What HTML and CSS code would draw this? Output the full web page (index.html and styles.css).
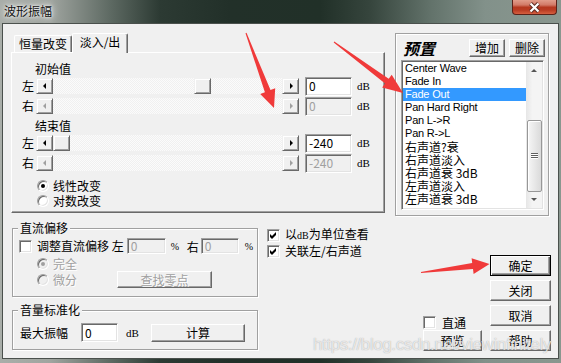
FILE: index.html
```html
<!DOCTYPE html>
<html lang="zh-CN">
<head>
<meta charset="utf-8">
<title>波形振幅</title>
<link rel="stylesheet" href="styles.css">
</head>
<body>
<div class="window">
  <div class="titlebar">
    <span class="title">波形振幅</span>
    <div class="close">
      <svg width="13" height="11" viewBox="0 0 13 11"><path class="x-out" d="M2.5 1.5 L10.5 9.5 M10.5 1.5 L2.5 9.5"/><path class="x-in" d="M2.5 1.5 L10.5 9.5 M10.5 1.5 L2.5 9.5"/></svg>
    </div>
  </div>
  <div class="client">
    <div class="top-row">
      <div class="tabctl">
        <div class="tab-heads">
          <div class="tab">恒量改变</div>
          <div class="tab sel">淡入/出</div>
        </div>
        <div class="tab-panel">
          <div class="sec-label">初始值</div>
          <div class="srow">
            <span class="lr">左</span>
            <div class="hscroll">
              <div class="sbtn"><i class="tri tri-l"></i></div>
              <div class="track"><div class="thumb" style="margin-left:141px"></div></div>
              <div class="sbtn"><i class="tri tri-r"></i></div>
            </div>
            <div class="edit ed-wide">0</div>
            <span class="db">dB</span>
          </div>
          <div class="srow">
            <span class="lr">右</span>
            <div class="hscroll">
              <div class="sbtn"><i class="tri tri-l dis"></i></div>
              <div class="track"></div>
              <div class="sbtn"><i class="tri tri-r dis"></i></div>
            </div>
            <div class="edit ed-wide disabled">0</div>
            <span class="db">dB</span>
          </div>
          <div class="sec-label second">结束值</div>
          <div class="srow">
            <span class="lr">左</span>
            <div class="hscroll">
              <div class="sbtn"><i class="tri tri-l"></i></div>
              <div class="track"><div class="thumb" style="margin-left:0px"></div></div>
              <div class="sbtn"><i class="tri tri-r"></i></div>
            </div>
            <div class="edit ed-wide">-240</div>
            <span class="db">dB</span>
          </div>
          <div class="srow">
            <span class="lr">右</span>
            <div class="hscroll">
              <div class="sbtn"><i class="tri tri-l dis"></i></div>
              <div class="track"></div>
              <div class="sbtn"><i class="tri tri-r dis"></i></div>
            </div>
            <div class="edit ed-wide disabled">-240</div>
            <span class="db">dB</span>
          </div>
          <div class="radios">
            <div class="radio-row"><span class="radio on"></span><span class="rlabel">线性改变</span></div>
            <div class="radio-row"><span class="radio"></span><span class="rlabel">对数改变</span></div>
          </div>
        </div>
      </div>
      <div class="preset">
        <div class="preset-head">
          <span class="preset-title">预置</span>
          <div class="btn small first">增加</div>
          <div class="btn small">删除</div>
        </div>
        <div class="listbox">
          <div class="items">
            <div class="it lat">Center Wave</div>
            <div class="it lat">Fade In</div>
            <div class="it lat sel">Fade Out</div>
            <div class="it lat">Pan Hard Right</div>
            <div class="it lat">Pan L-&gt;R</div>
            <div class="it lat">Pan R-&gt;L</div>
            <div class="it">右声道?衰</div>
            <div class="it">右声道淡入</div>
            <div class="it">右声道衰 3dB</div>
            <div class="it">左声道淡入</div>
            <div class="it">左声道衰 3dB</div>
          </div>
          <div class="vscroll">
            <div class="va"><i class="vtri up"></i></div>
            <div class="vtrack"><div class="vthumb"><i class="grip"></i></div></div>
            <div class="va"><i class="vtri down"></i></div>
          </div>
        </div>
      </div>
    </div>
    <div class="bottom-row">
      <div class="col1">
        <div class="group g1">
          <div class="legend">直流偏移</div>
          <div class="g1-row">
            <span class="check"></span>
            <span class="chk-text">调整直流偏移 左</span>
            <div class="edit ed-dc1 disabled">0</div>
            <span class="pct">%</span>
            <span class="right-lbl">右</span>
            <div class="edit ed-dc2 disabled">0</div>
            <span class="pct pct2">%</span>
          </div>
          <div class="radio-row dis-row r-full"><span class="radio on dis"></span><span class="rlabel dis-text">完全</span></div>
          <div class="g1-last">
            <div class="radio-row dis-row r-diff"><span class="radio dis"></span><span class="rlabel dis-text">微分</span></div>
            <div class="btn find dis-text">查找零点</div>
          </div>
        </div>
        <div class="group g2">
          <div class="legend">音量标准化</div>
          <div class="g2-row">
            <span>最大振幅</span>
            <div class="edit ed-max">0</div>
            <span class="db db2">dB</span>
            <div class="btn calc">计算</div>
          </div>
        </div>
      </div>
      <div class="col2">
        <div class="chk-row"><span class="check on"><svg width="9" height="9" viewBox="0 0 9 9"><path d="M1 3 L3 5 L7 1 L7 4 L3 8 L1 6 Z"/></svg></span><span class="chk-text">以<span class="db-in">dB</span>为单位查看</span></div>
        <div class="chk-row"><span class="check on"><svg width="9" height="9" viewBox="0 0 9 9"><path d="M1 3 L3 5 L7 1 L7 4 L3 8 L1 6 Z"/></svg></span><span class="chk-text">关联左/右声道</span></div>
      </div>
      <div class="col3">
        <div class="chk-row thru"><span class="check"></span><span class="thru-text">直通</span></div>
        <div class="btn act">预览</div>
      </div>
      <div class="col4">
        <div class="btn act def">确定</div>
        <div class="btn act">关闭</div>
        <div class="btn act">取消</div>
        <div class="btn act">帮助</div>
      </div>
    </div>
  </div>
  <svg class="arrows" width="561" height="363" viewBox="0 0 561 363">
    <polygon points="245.5,33.2 264.9,92.2 260.2,93.9 274,108 275.2,88.3 270.5,90.0 246.5,32.8"/>
    <polygon points="333.7,42.4 385.1,83.5 382.1,87.5 403,93 391.7,74.7 388.7,78.7 334.3,41.6"/>
    <polygon points="421.1,273.0 473.0,269.1 473.6,274.0 489.5,264 471.6,258.2 472.2,263.1 420.9,272.0"/>
  </svg>
  <div class="watermark">https://blog.csdn.net/viewinfinitely</div>
</div>
</body>
</html>
```

FILE: styles.css
```css
* { box-sizing: border-box; margin: 0; padding: 0; }
html, body { margin: 0; background: #f0f0f0; }
body {
  font-family: "Noto Sans CJK SC", "Noto Sans", sans-serif;
  font-size: 12px;
  color: #000;
}
i { display: block; }

.window {
  position: relative;
  width: 561px;
  height: 363px;
  overflow: hidden;
  background: linear-gradient(90deg, #a9aea9 0, #a0a5a0 50px, #5e6a63 110px, #2c3a33 160px, #223029 230px, #213028 320px, #36453d 370px, #62726a 430px, #82918a 485px, #8a978f 561px);
}

/* title bar */
.titlebar { height: 23px; display: flex; align-items: flex-start; }
.title {
  margin: 3px 0 0 4px;
  line-height: 16px;
  font-size: 12px;
  color: #111;
  text-shadow: 0 0 3px #fff, 0 0 6px rgba(255,255,255,.8), 0 0 10px rgba(255,255,255,.6);
}
.close {
  margin-left: auto;
  margin-right: 4px;
  width: 45px;
  height: 15px;
  border: 1px solid #5b2219;
  border-top: none;
  border-radius: 0 0 4px 4px;
  background: linear-gradient(#e19c8a 0, #d27a67 35%, #b5381f 52%, #b93c23 72%, #d65f40 100%);
  display: flex;
  align-items: center;
  justify-content: center;
}
.x-out { stroke: #5a2a22; stroke-width: 4; fill: none; }
.x-in { stroke: #fff; stroke-width: 2.2; fill: none; }

/* client */
.client {
  margin-left: 2px;
  width: 557px;
  height: 336px;
  background: #f0f0f0;
  border: 1px solid #4a504c;
  padding: 9px 0 0 8px;
}
.top-row { display: flex; align-items: flex-start; }

/* tabs */
.tabctl { width: 374px; }
.tab-heads {
  position: relative;
  z-index: 1;
  display: flex;
  align-items: flex-end;
  height: 19px;
  padding-left: 3px;
}
.tab {
  height: 17px;
  width: 58px;
  text-align: center;
  line-height: 16px;
  background: #f0f0f0;
  border-top: 1px solid #fff;
  border-left: 1px solid #fff;
  border-right: 1px solid #696969;
  box-shadow: inset -1px 0 #a0a0a0;
  border-radius: 2px 2px 0 0;
}
.tab.sel {
  height: 20px;
  width: 56px;
  margin-bottom: -1px;
}
.tab-panel {
  height: 161px;
  border: 1px solid;
  border-color: #fff #696969 #696969 #fff;
  box-shadow: inset -1px -1px #a0a0a0;
  padding: 9px 0 0 10px;
}
.sec-label { margin-left: 13px; line-height: 14px; }
.sec-label.second { margin-top: 3px; }
.srow { display: flex; align-items: center; height: 20px; }
.lr { width: 14px; line-height: 14px; }
.hscroll { display: flex; width: 263px; height: 16px; }
.sbtn, .thumb {
  width: 17px;
  height: 16px;
  background: #f0f0f0;
  border: 1px solid;
  border-color: #f0f0f0 #696969 #696969 #f0f0f0;
  box-shadow: inset 1px 1px #fff, inset -1px -1px #a0a0a0;
  display: flex;
  align-items: center;
  justify-content: center;
  flex: none;
}
.track {
  flex: 1;
  height: 16px;
  background: repeating-conic-gradient(#f0f0f0 0 25%, #fbfbfb 0 50%) 0 0 / 2px 2px;
}
.tri { width: 0; height: 0; border-top: 3px solid transparent; border-bottom: 3px solid transparent; }
.tri-l { border-right: 3px solid #000; margin-left: -1px; }
.tri-r { border-left: 3px solid #000; margin-left: 1px; }
.tri-l.dis { border-right-color: #a0a0a0; }
.tri-r.dis { border-left-color: #a0a0a0; }

.edit {
  background: #fff;
  border: 1px solid;
  border-color: #a0a0a0 #fff #fff #a0a0a0;
  box-shadow: inset 1px 1px #696969, inset -1px -1px #e3e3e3;
  padding-left: 3px;
  display: flex;
  align-items: center;
  line-height: 14px;
  flex: none;
}
.edit.disabled { background: #f0f0f0; color: #a0a0a0; }
.ed-wide { margin-left: 6px; width: 47px; height: 19px; }
.db {
  display: inline-block;
  width: 12px;
  margin-left: 5px;
  font-family: "Liberation Serif", serif;
  font-size: 11px;
  line-height: 14px;
}

.radios { margin-top: 5px; }
.radio-row { display: flex; align-items: center; height: 15px; padding-left: 15px; }
.radio {
  width: 12px;
  height: 12px;
  border-radius: 50%;
  background: #fff;
  border: 1px solid;
  border-color: #a0a0a0 #fff #fff #a0a0a0;
  box-shadow: inset 1px 1px #696969, inset -1px -1px #e3e3e3;
  display: flex;
  align-items: center;
  justify-content: center;
  flex: none;
}
.radio.on::after {
  content: "";
  width: 4px;
  height: 4px;
  border-radius: 50%;
  background: #000;
}
.radio.dis { background: #f0f0f0; }
.radio.dis.on::after { background: #a0a0a0; }
.rlabel { margin-left: 4px; line-height: 14px; }
.dis-text { color: #a0a0a0; text-shadow: 1px 1px #fff; }

/* preset group */
.preset {
  margin-left: 10px;
  width: 154px;
  height: 183px;
  border: 1px solid #a0a0a0;
  box-shadow: inset 1px 1px #fff, 1px 1px #fff;
  padding: 5px 3px 0 5px;
}
.preset-head { display: flex; align-items: center; height: 18px; }
.preset-title {
  margin-left: 2px;
  font-size: 16px;
  font-weight: bold;
  font-style: italic;
  line-height: 18px;
}
.btn {
  display: flex;
  align-items: center;
  justify-content: center;
  background: #f0f0f0;
  border: 1px solid;
  border-color: #fff #696969 #696969 #fff;
  box-shadow: inset -1px -1px #a0a0a0;
  line-height: 14px;
  flex: none;
}
.btn.small { width: 36px; height: 18px; margin-left: 4px; }
.btn.small.first { margin-left: auto; }

.listbox {
  margin-top: 3px;
  width: 143px;
  height: 150px;
  display: flex;
  background: #fff;
  border: 1px solid;
  border-color: #a0a0a0 #fff #fff #a0a0a0;
  box-shadow: inset 1px 1px #696969, inset -1px -1px #e3e3e3;
  padding: 1px;
}
.items { flex: 1; }
.it {
  height: 13px;
  line-height: 13px;
  padding-left: 2px;
  font-size: 12px;
  white-space: nowrap;
}
.it.lat {
  font-family: "Liberation Sans", Arial, sans-serif;
  font-size: 11px;
  letter-spacing: -0.2px;
}
.it.sel { background: #3399ff; color: #fff; }
.vscroll {
  width: 16px;
  display: flex;
  flex-direction: column;
  background: linear-gradient(90deg, #e6e6e6, #f4f4f4 40%, #f4f4f4);
}
.va { height: 17px; display: flex; align-items: center; justify-content: center; }
.vtri { width: 0; height: 0; border-left: 3px solid transparent; border-right: 3px solid transparent; }
.vtri.up { border-bottom: 3px solid #555; }
.vtri.down { border-top: 3px solid #555; }
.vtrack { flex: 1; }
.vthumb {
  margin: 41px 0 0 1px;
  width: 15px;
  height: 72px;
  border: 1px solid #979797;
  border-radius: 2px;
  background: linear-gradient(90deg, #f6f6f6, #e8e8e8 50%, #dadada);
  box-shadow: inset 1px 1px #fff;
  display: flex;
  align-items: center;
  justify-content: center;
}
.grip {
  width: 7px;
  height: 6px;
  background: repeating-linear-gradient(#5f5f5f 0 1px, #fff 1px 2px);
}

/* bottom */
.bottom-row { display: flex; margin-top: 12px; padding-left: 1px; }
.col1 { width: 246px; flex: none; }
.group {
  border: 1px solid #a0a0a0;
  box-shadow: inset 1px 1px #fff, 1px 1px #fff;
}
.g1 { height: 69px; }
.g2 { height: 40px; margin-top: 13px; }
.legend {
  width: fit-content;
  margin: -8px 0 0 5px;
  padding: 0 2px;
  background: #f0f0f0;
  line-height: 14px;
}
.g1-row { display: flex; align-items: center; height: 16px; margin-top: 3px; padding-left: 6px; }
.check {
  width: 13px;
  height: 13px;
  background: #fff;
  border: 1px solid;
  border-color: #a0a0a0 #fff #fff #a0a0a0;
  box-shadow: inset 1px 1px #696969, inset -1px -1px #e3e3e3;
  display: flex;
  align-items: center;
  justify-content: center;
  flex: none;
}
.check svg { fill: #000; }
.chk-text { margin-left: 5px; line-height: 14px; white-space: nowrap; }
.ed-dc1 { margin-left: 3px; width: 39px; height: 16px; }
.ed-dc2 { margin-left: 2px; width: 38px; height: 16px; }
.pct {
  display: inline-block;
  width: 7px;
  margin-left: 5px;
  font-family: "Liberation Serif", serif;
  font-size: 10px;
}
.pct2 { margin-left: 6px; }
.right-lbl { margin-left: 9px; }
.r-full { margin-top: 2px; padding-left: 24px; }
.g1-last { display: flex; align-items: center; height: 17px; }
.r-diff { width: 104px; padding-left: 24px; }
.btn.find { width: 95px; height: 17px; }

.g2-row { display: flex; align-items: center; height: 19px; margin-top: 6px; padding-left: 7px; }
.ed-max { margin-left: 13px; width: 37px; height: 19px; }
.db2 { margin-left: 8px; }
.btn.calc { margin-left: 13px; width: 94px; height: 18px; }

.col2 { margin-left: 9px; width: 156px; flex: none; margin-top: -1px; }
.chk-row { display: flex; align-items: center; height: 16px; }
.db-in { font-family: "Liberation Serif", serif; font-size: 10px; }

.col3 { width: 59px; flex: none; display: flex; flex-direction: column; justify-content: flex-end; }
.chk-row.thru { height: 15px; }
.thru-text { margin-left: 6px; line-height: 14px; }
.btn.act { width: 59px; height: 21px; }

.col4 { margin-left: 8px; width: 61px; flex: none; margin-top: 27px; }
.col4 .btn.act { width: 61px; margin-top: 4px; }
.col4 .btn.act.def { margin-top: 0; }
.btn.def {
  border-color: #000;
  box-shadow: inset 1px 1px #fff, inset -1px -1px #696969, inset -2px -2px #a0a0a0;
}

/* overlays */
.arrows { position: absolute; left: 0; top: 0; pointer-events: none; }
.arrows polygon { fill: #f03a3a; }
.watermark {
  position: absolute;
  left: 313px;
  top: 335px;
  font-family: "Liberation Sans", Arial, sans-serif;
  font-size: 17px;
  line-height: 19px;
  letter-spacing: -0.4px;
  color: rgba(255, 255, 255, 0.72);
  text-shadow: 0 0 1px rgba(90, 90, 90, 0.55);
  white-space: nowrap;
  pointer-events: none;
}
```
